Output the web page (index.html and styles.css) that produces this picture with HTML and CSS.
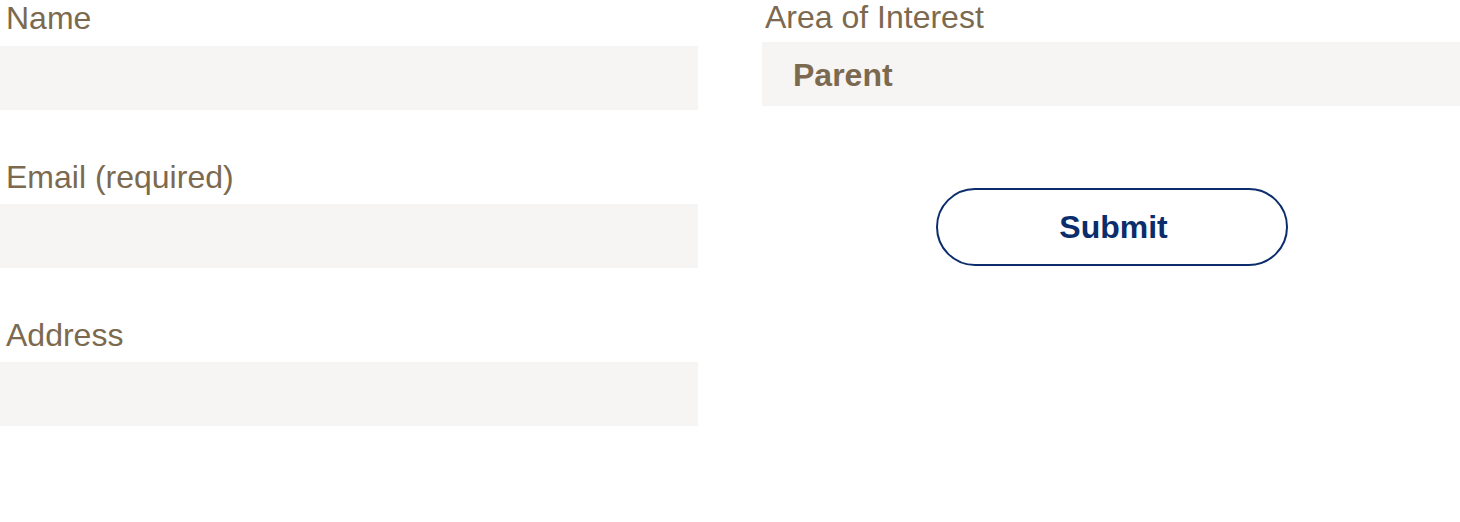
FILE: index.html
```html
<!DOCTYPE html>
<html lang="en">
<head>
<meta charset="utf-8">
<title>Contact form</title>
<link rel="stylesheet" href="styles.css">
</head>
<body>
<form class="form">
  <div class="col col-left">
    <div class="field">
      <label class="label" for="name">Name</label>
      <input class="input" id="name" type="text">
    </div>
    <div class="field">
      <label class="label" for="email">Email (required)</label>
      <input class="input" id="email" type="email">
    </div>
    <div class="field">
      <label class="label" for="address">Address</label>
      <input class="input" id="address" type="text">
    </div>
  </div>
  <div class="col col-right">
    <div class="field field-select">
      <label class="label label-right" for="area">Area of Interest</label>
      <div class="select" id="area">Parent</div>
    </div>
    <div class="actions">
      <button class="submit" type="button">Submit</button>
    </div>
  </div>
</form>
</body>
</html>
```
FILE: styles.css
```css
html, body {
  margin: 0;
  padding: 0;
  background: #ffffff;
}
body {
  font-family: "Liberation Sans", Arial, sans-serif;
  width: 1460px;
  height: 522px;
  overflow: hidden;
}
.form {
  display: grid;
  grid-template-columns: 698px 698px;
  column-gap: 64px;
}
.col {
  display: flex;
  flex-direction: column;
}
.col-left {
  gap: 49px;
}
.field {
  display: flex;
  flex-direction: column;
}
.label {
  display: block;
  font-size: 32px;
  line-height: 37px;
  color: #7b6a50;
  margin-bottom: 8px;
  padding-left: 6px;
}
.col-left .field:first-child .label {
  margin-bottom: 9px;
}
.label-right {
  line-height: 35px;
  margin-bottom: 7px;
  padding-left: 3px;
}
.input {
  display: block;
  box-sizing: border-box;
  width: 100%;
  height: 64px;
  border: 0;
  padding: 0 20px;
  margin: 0;
  background: #f6f5f3;
  font-family: inherit;
  font-size: 24px;
  color: #7b6a50;
  outline: none;
}
.select {
  box-sizing: border-box;
  height: 64px;
  display: flex;
  align-items: center;
  padding: 2px 31px 0;
  background: #f6f5f3;
  font-size: 32px;
  font-weight: bold;
  color: #7b6a50;
}
.actions {
  display: flex;
  justify-content: center;
  margin-top: 82px;
}
.submit {
  box-sizing: border-box;
  width: 352px;
  height: 78px;
  border: 2px solid #0b2d6b;
  border-radius: 39px;
  background: #ffffff;
  color: #0b2d6b;
  font-family: "Liberation Sans", Arial, sans-serif;
  font-size: 32px;
  font-weight: bold;
  padding: 0 0 0 3px;
  margin-left: 2px;
  cursor: pointer;
}
```
